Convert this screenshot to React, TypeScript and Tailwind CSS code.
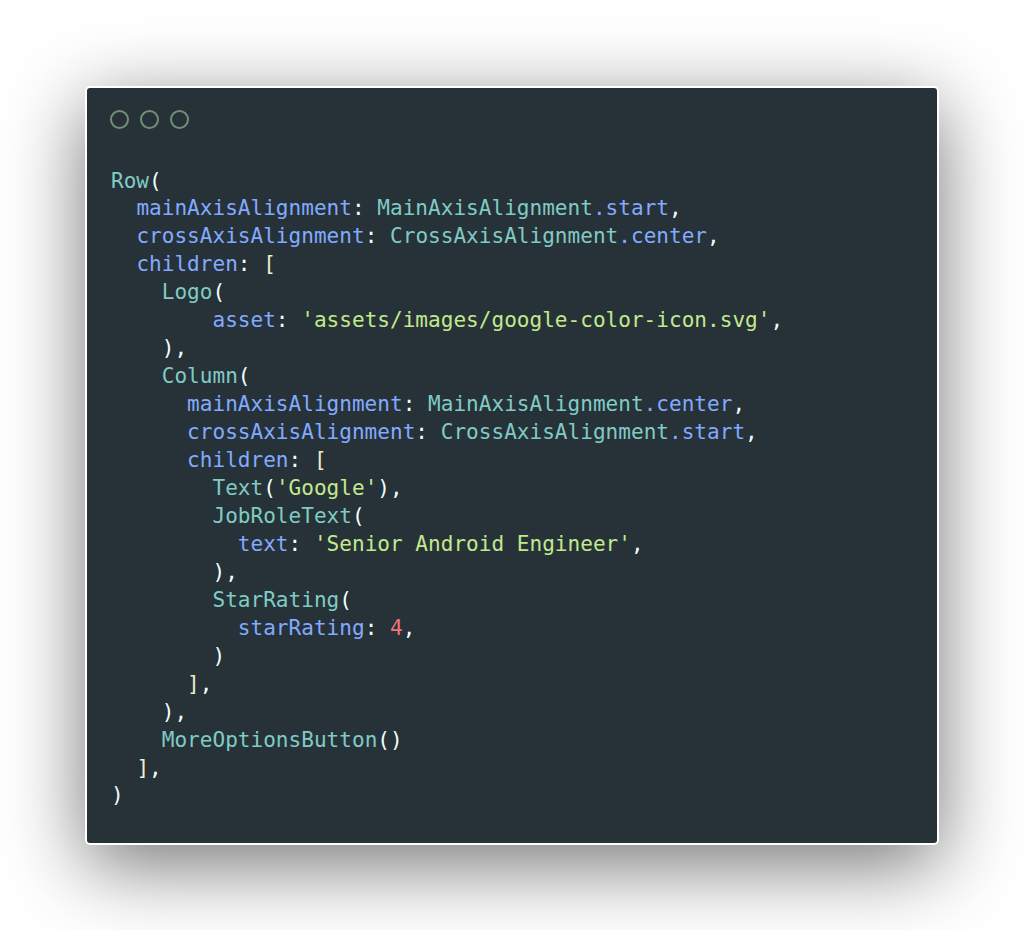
type Tok = [string, string];

const C = {
  cls: 'text-[#80cbc4]',
  prop: 'text-[#82aaff]',
  str: 'text-[#c3e88d]',
  num: 'text-[#f07178]',
  punc: 'text-[#eeffff]',
  brk: 'text-[#eeeecc]',
};

const lines: Tok[][] = [
  [[C.cls, 'Row'], [C.punc, '(']],
  [[C.punc, '  '], [C.prop, 'mainAxisAlignment'], [C.punc, ': '], [C.cls, 'MainAxisAlignment'], [C.prop, '.start'], [C.punc, ',']],
  [[C.punc, '  '], [C.prop, 'crossAxisAlignment'], [C.punc, ': '], [C.cls, 'CrossAxisAlignment'], [C.prop, '.center'], [C.punc, ',']],
  [[C.punc, '  '], [C.prop, 'children'], [C.punc, ': '], [C.brk, '[']],
  [[C.punc, '    '], [C.cls, 'Logo'], [C.punc, '(']],
  [[C.punc, '        '], [C.prop, 'asset'], [C.punc, ': '], [C.str, "'assets/images/google-color-icon.svg'"], [C.punc, ',']],
  [[C.punc, '    ),']],
  [[C.punc, '    '], [C.cls, 'Column'], [C.punc, '(']],
  [[C.punc, '      '], [C.prop, 'mainAxisAlignment'], [C.punc, ': '], [C.cls, 'MainAxisAlignment'], [C.prop, '.center'], [C.punc, ',']],
  [[C.punc, '      '], [C.prop, 'crossAxisAlignment'], [C.punc, ': '], [C.cls, 'CrossAxisAlignment'], [C.prop, '.start'], [C.punc, ',']],
  [[C.punc, '      '], [C.prop, 'children'], [C.punc, ': '], [C.brk, '[']],
  [[C.punc, '        '], [C.cls, 'Text'], [C.punc, '('], [C.str, "'Google'"], [C.punc, '),']],
  [[C.punc, '        '], [C.cls, 'JobRoleText'], [C.punc, '(']],
  [[C.punc, '          '], [C.prop, 'text'], [C.punc, ': '], [C.str, "'Senior Android Engineer'"], [C.punc, ',']],
  [[C.punc, '        ),']],
  [[C.punc, '        '], [C.cls, 'StarRating'], [C.punc, '(']],
  [[C.punc, '          '], [C.prop, 'starRating'], [C.punc, ': '], [C.num, '4'], [C.punc, ',']],
  [[C.punc, '        )']],
  [[C.punc, '      '], [C.brk, ']'], [C.punc, ',']],
  [[C.punc, '    ),']],
  [[C.punc, '    '], [C.cls, 'MoreOptionsButton'], [C.punc, '()']],
  [[C.punc, '  '], [C.brk, ']'], [C.punc, ',']],
  [[C.punc, ')']],
];

export default function App() {
  return (
    <div className="min-h-screen w-full bg-white flex items-center justify-center">
      <div className="w-[854px] h-[759px] rounded-[5px] border-2 border-white bg-[#263238] shadow-[0_20px_80px_rgba(0,0,0,0.55)] flex flex-col pt-[22px] pl-[23px] pr-[24px]">
        {/* Window controls */}
        <div className="flex gap-[11px] shrink-0">
          <span className="w-[19px] h-[19px] rounded-full border-2 border-[#718f76]" />
          <span className="w-[19px] h-[19px] rounded-full border-2 border-[#718f76]" />
          <span className="w-[19px] h-[19px] rounded-full border-2 border-[#718f76]" />
        </div>

        {/* Code */}
        <pre className="m-0 mt-[38px] pl-[1px] font-['DejaVu_Sans_Mono',monospace] text-[21.07px] leading-[27.95px] whitespace-pre">
          {lines.map((line, i) => (
            <div key={i}>
              {line.map(([c, t], j) => (
                <span key={j} className={c}>
                  {t}
                </span>
              ))}
            </div>
          ))}
        </pre>
      </div>
    </div>
  );
}
